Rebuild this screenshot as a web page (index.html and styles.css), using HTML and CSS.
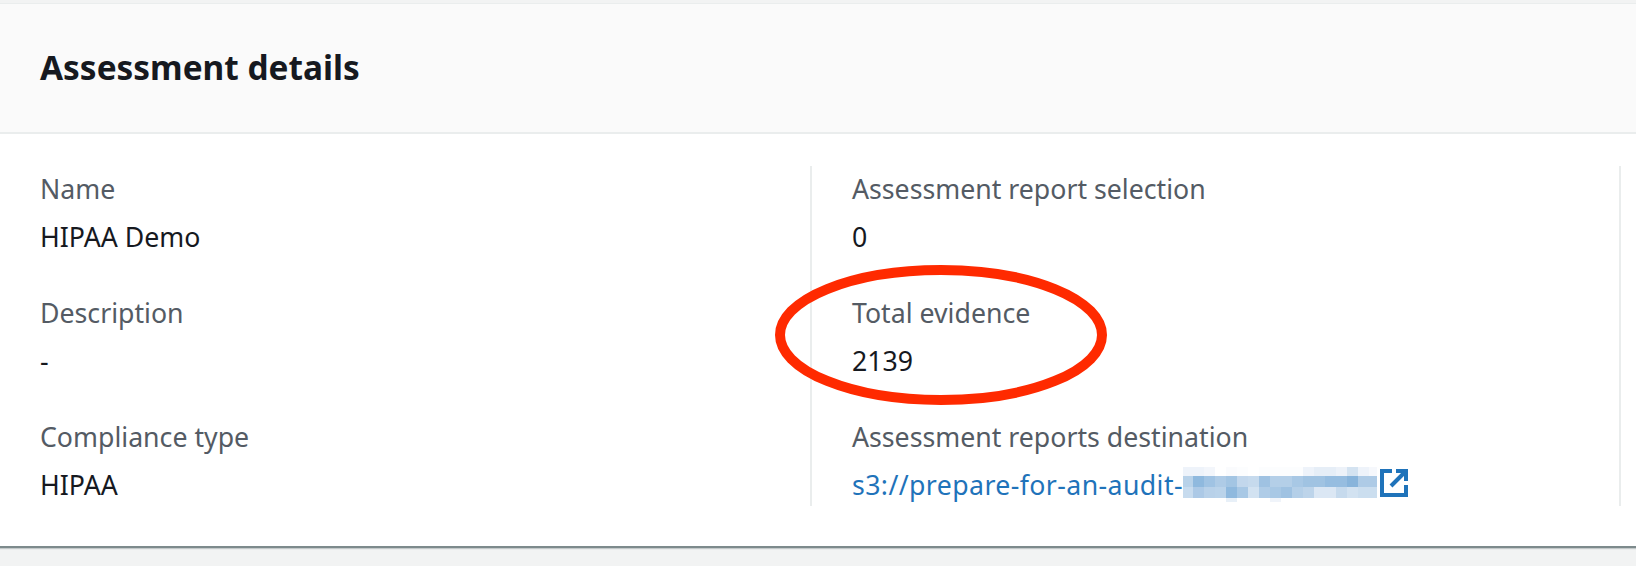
FILE: index.html
```html
<!DOCTYPE html>
<html lang="en">
<head>
<meta charset="utf-8">
<title>Assessment details</title>
<link rel="stylesheet" href="styles.css">
</head>
<body>
<section class="card">
  <header class="card-header"><h2 class="title">Assessment details</h2></header>
  <div class="card-body">
    <div class="column">
      <div class="field"><div class="label">Name</div><div class="value">HIPAA Demo</div></div>
      <div class="field"><div class="label">Description</div><div class="value">-</div></div>
      <div class="field"><div class="label">Compliance type</div><div class="value">HIPAA</div></div>
    </div>
    <div class="column">
      <div class="field"><div class="label">Assessment report selection</div><div class="value">0</div></div>
      <div class="field"><div class="label">Total evidence</div><div class="value">2139</div></div>
      <div class="field"><div class="label">Assessment reports destination</div>
        <div class="value link-row"><a class="link" href="#">s3://prepare-for-an-audit-</a>
          <svg class="blur" width="194" height="35" viewBox="0 0 194 35" shape-rendering="crispEdges" aria-hidden="true">
            <g id="r1">
              <rect x="0" y="0" width="21" height="9" fill="#eef3fa"/><rect x="21" y="0" width="11" height="9" fill="#f3f6fb"/><rect x="43" y="0" width="11" height="9" fill="#fafbfd"/><rect x="54" y="0" width="11" height="9" fill="#fcfdfe"/><rect x="76" y="0" width="44" height="9" fill="#fcfdfe"/><rect x="120" y="0" width="11" height="9" fill="#eef3fa"/><rect x="131" y="0" width="22" height="9" fill="#e6eef7"/><rect x="153" y="0" width="11" height="9" fill="#edf2f9"/><rect x="164" y="0" width="11" height="9" fill="#d4e3f1"/><rect x="175" y="0" width="11" height="9" fill="#eef3fa"/><rect x="186" y="0" width="8" height="9" fill="#f6f8fc"/>
            </g>
            <g id="r2">
              <rect x="0" y="9" width="10" height="11" fill="#b8d2e9"/><rect x="10" y="9" width="11" height="11" fill="#8fb9de"/><rect x="21" y="9" width="11" height="11" fill="#a0c3e3"/><rect x="32" y="9" width="11" height="11" fill="#aecbe6"/><rect x="43" y="9" width="11" height="11" fill="#a3c5e3"/><rect x="54" y="9" width="11" height="11" fill="#c2d7ec"/><rect x="65" y="9" width="11" height="11" fill="#c6daed"/><rect x="76" y="9" width="11" height="11" fill="#9fc2e2"/><rect x="87" y="9" width="22" height="11" fill="#b4cfe8"/><rect x="109" y="9" width="11" height="11" fill="#a8c8e5"/><rect x="120" y="9" width="22" height="11" fill="#a0c3e2"/><rect x="142" y="9" width="22" height="11" fill="#96bde0"/><rect x="164" y="9" width="11" height="11" fill="#88b4db"/><rect x="175" y="9" width="19" height="11" fill="#aecbe6"/>
            </g>
            <g id="r3">
              <rect x="0" y="20" width="10" height="11" fill="#c7dbee"/><rect x="10" y="20" width="11" height="11" fill="#acc9e6"/><rect x="21" y="20" width="11" height="11" fill="#b8d1e9"/><rect x="32" y="20" width="11" height="11" fill="#bad3ea"/><rect x="43" y="20" width="11" height="11" fill="#8fb9de"/><rect x="54" y="20" width="11" height="11" fill="#a8c8e5"/><rect x="65" y="20" width="11" height="11" fill="#d2e2f1"/><rect x="76" y="20" width="11" height="11" fill="#afcce7"/><rect x="87" y="20" width="11" height="11" fill="#a8c8e5"/><rect x="98" y="20" width="11" height="11" fill="#9fc2e2"/><rect x="109" y="20" width="11" height="11" fill="#b4cfe8"/><rect x="120" y="20" width="11" height="11" fill="#bdd4ea"/><rect x="131" y="20" width="22" height="11" fill="#dbe7f4"/><rect x="153" y="20" width="11" height="11" fill="#c6daed"/><rect x="164" y="20" width="11" height="11" fill="#d2e2f1"/><rect x="175" y="20" width="19" height="11" fill="#cbdeef"/>
            </g>
            <rect x="43" y="31" width="11" height="4" fill="#e8f0f8"/><rect x="87" y="31" width="11" height="4" fill="#f0f4fa"/>
          </svg>
          <svg class="external" width="28" height="28" viewBox="0 0 28 28" aria-hidden="true">
            <path d="M12 2H2V26H26V16" fill="none" stroke="#1f73ba" stroke-width="4"/>
            <path d="M16 2H26V12" fill="none" stroke="#1f73ba" stroke-width="4"/>
            <path d="M25 3L11 17" fill="none" stroke="#1f73ba" stroke-width="4"/>
          </svg>
        </div>
      </div>
    </div>
  </div>
</section>
<svg class="annotation" width="340" height="148" viewBox="0 0 340 148" aria-hidden="true">
  <ellipse cx="169" cy="74" rx="161" ry="65" fill="none" stroke="#ff2a00" stroke-width="10"/>
</svg>
</body>
</html>
```
FILE: styles.css
```css
* { box-sizing: border-box; }
html, body { margin: 0; padding: 0; height: 100%; }
body {
  background: #f2f3f3;
  padding-top: 3px;
  overflow: hidden;
  font-family: "Noto Sans", "Open Sans", sans-serif;
  position: relative;
}
.card {
  background: #fff;
  border-top: 1px solid #eaeded;
  border-bottom: 2px solid #7d8a8c;
  box-shadow: 0 1px 1px rgba(125, 138, 140, .4);
  height: 545px;
  display: flex;
  flex-direction: column;
}
.card-header {
  height: 130px;
  background: #fafafa;
  border-bottom: 2px solid #eaeded;
  padding-left: 40px;
  padding-bottom: 2px;
  display: flex;
  align-items: center;
}
.title {
  margin: 0;
  font-size: 33.4px;
  font-weight: 700;
  color: #16191f;
}
.card-body {
  display: flex;
  padding-top: 32px;
}
.column {
  width: 809px;
  height: 340px;
  padding-left: 40px;
  border-right: 2px solid #eaeded;
  display: flex;
  flex-direction: column;
  gap: 28px;
}
.column:first-child { width: 812px; }
.field { height: 96px; }
.field:first-child { margin-top: -1px; }
.label, .value {
  font-size: 26.7px;
  line-height: 48px;
  white-space: nowrap;
}
.label { color: #545b64; }
.value { color: #16191f; }
.link-row { display: flex; align-items: center; }
.link { color: #1f73ba; text-decoration: none; letter-spacing: .4px; }
.blur { flex: none; margin-top: -1px; }
.external { flex: none; margin-left: 3px; margin-top: -4px; }
.annotation {
  position: absolute;
  left: 772px;
  top: 261px;
}
```
